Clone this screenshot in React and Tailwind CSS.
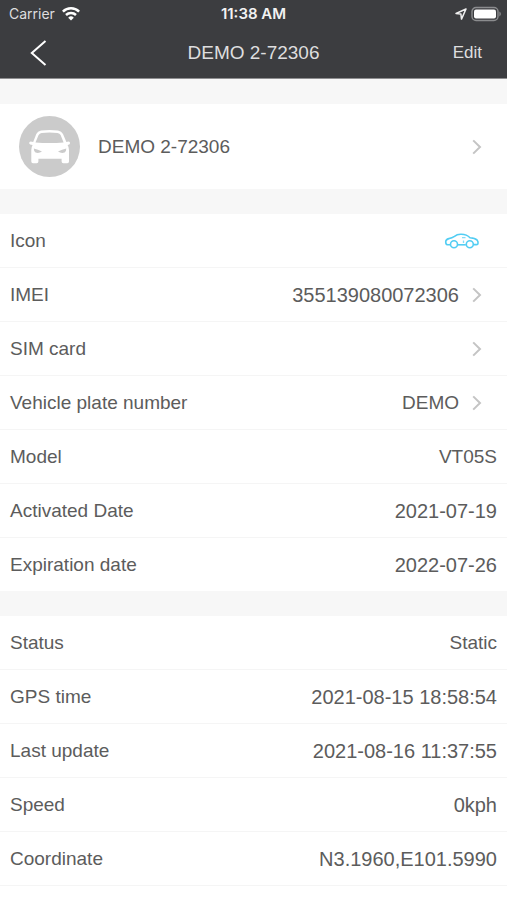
import React from "react";

const deviceInfo = [
  { label: "IMEI", value: "355139080072306", link: true, numeric: true },
  { label: "SIM card", value: "", link: true },
  { label: "Vehicle plate number", value: "DEMO", link: true },
  { label: "Model", value: "VT05S" },
  { label: "Activated Date", value: "2021-07-19", numeric: true },
  { label: "Expiration date", value: "2022-07-26", numeric: true },
];

const statusInfo = [
  { label: "Status", value: "Static" },
  { label: "GPS time", value: "2021-08-15 18:58:54", numeric: true },
  { label: "Last update", value: "2021-08-16 11:37:55", numeric: true },
  { label: "Speed", value: "0kph", numeric: true },
  { label: "Coordinate", value: "N3.1960,E101.5990", numeric: true },
];

const Chevron = () => (
  <svg className="w-3 h-4 shrink-0" viewBox="0 0 12 16" fill="none" stroke="#c4c4c4" strokeWidth="2">
    <path d="M2.2 1.4 9 8l-6.8 6.6" />
  </svg>
);

const WifiIcon = () => (
  <svg className="w-5 h-4" viewBox="0 0 20 16" fill="none" stroke="#fff" strokeWidth="2.5">
    <path d="M1.9 5.6a11.6 11.6 0 0 1 16.2 0" />
    <path d="M5 9a7.2 7.2 0 0 1 10 0" />
    <path d="M10 14.6 7.2 11.7a4 4 0 0 1 5.6 0z" fill="#fff" stroke="none" />
  </svg>
);

const LocationIcon = () => (
  <svg className="w-3 h-3" viewBox="0 0 12 12" fill="none" stroke="#f0f0f0" strokeWidth="1.5" strokeLinejoin="round">
    <path d="M11 1 1 5.5l4.9.6.6 5z" />
  </svg>
);

const BatteryIcon = () => (
  <svg className="w-8 h-4" viewBox="0 0 32 16">
    <rect x="1" y="1.5" width="26" height="13" rx="4" fill="none" stroke="#8b8c8e" strokeWidth="1.4" />
    <rect x="3" y="3.5" width="22" height="9" rx="2" fill="#fff" />
    <path d="M28.4 5.6c2 1 2 3.8 0 4.8z" fill="#8b8c8e" />
  </svg>
);

// Front view of a car in the round avatar
const CarAvatar = () => (
  <svg className="w-[61px] h-[61px] shrink-0" viewBox="0 0 61 61">
    <circle cx="30.5" cy="30.5" r="30.5" fill="#cbcbcb" />
    <path
      fill="#fff"
      fillRule="evenodd"
      d="M22 14.5Q30.5 13.3 39 14.5Q42.6 15 44 18L47.4 26L49.5 25.6Q51.3 25.7 51 27.4Q50.7 28.6 48.6 29Q50 31.3 50 34V45.5Q50 47.3 48.3 47.3H44.3Q42.6 47.3 42.6 45.5V42.8H19.4V45.5Q19.4 47.3 17.7 47.3H14Q12.3 47.3 12.3 45.5V34Q12.3 31.3 13.6 29Q10.4 28.6 10.2 27.4Q10 25.7 11.7 25.6L14.2 26L17.3 18Q18.6 15 22 14.5Z
      M22.6 17Q30.5 16 38.5 17Q40.8 17.3 41.6 19L44.6 26.5Q30.5 27.6 16.5 26.5L19.6 19Q20.5 17.3 22.6 17Z
      M14.8 32.5Q19 33.3 23 35.5Q20 37.7 16.5 36.6Q14.8 35.5 14.8 32.5Z
      M47.3 32.5Q43 33.3 39 35.5Q42 37.7 45.6 36.6Q47.3 35.5 47.3 32.5Z"
    />
  </svg>
);

const SideCarIcon = () => (
  <svg className="w-9 h-4" viewBox="0 0 36 16" fill="none" stroke="#52cdf3" strokeWidth="1.6" strokeLinejoin="round">
    <path d="M6.2 11.8H3.4Q1.7 11.5 1.7 8.8Q1.8 6.3 4.8 5.6Q8 5.2 10.5 3.4Q13 1.4 16.5 1.3Q22.5 1 26 4.8Q31 5.1 33.2 7.2Q34.4 8.8 34 10.4Q34 11.6 32.4 11.6H29.8" />
    <path d="M14 11.8H21.8" />
    <path d="M18 4.6h3.5M19.5 7.6v2.4" strokeWidth="1.3" opacity="0.7" />
    <circle cx="10" cy="11.2" r="3.5" />
    <circle cx="25.8" cy="11.2" r="3.5" />
  </svg>
);

const rowClass = "w-full min-h-[53px] flex items-center justify-between pl-[10px] text-left";

const InfoRow = ({ label, value, link, numeric }) => {
  const valueClass = numeric ? "text-[20px]" : "text-[19px]";

  if (link) {
    return (
      <li>
        <button type="button" className={`${rowClass} pr-6`}>
          <span>{label}</span>
          <span className="flex items-center gap-3">
            <span className={valueClass}>{value}</span>
            <Chevron />
          </span>
        </button>
      </li>
    );
  }

  return (
    <li>
      <div className={`${rowClass} pr-[10px]`}>
        <span>{label}</span>
        <span className={valueClass}>{value}</span>
      </div>
    </li>
  );
};

const App = () => {
  return (
    <div className="min-h-screen bg-white text-[19px] leading-6 text-[#5c5c5c] font-['Liberation_Sans',Arial,sans-serif]">
      <header className="bg-[#3c3d40] border-b border-[#8e8e90] text-[#dededf]">
        {/* Phone status bar */}
        <div className="h-[27px] grid grid-cols-[1fr_auto_1fr] items-center px-1 text-[14px] font-['Inter',sans-serif]">
          <div className="flex items-center gap-[6px] pl-[5px]">
            <span>Carrier</span>
            <WifiIcon />
          </div>
          <span className="text-[15px] font-semibold text-[#f2f2f2]">11:38 AM</span>
          <div className="flex items-center justify-end gap-1">
            <LocationIcon />
            <BatteryIcon />
          </div>
        </div>

        {/* Title bar */}
        <div className="h-[51px] grid grid-cols-[1fr_auto_1fr] items-center px-[25px]">
          <button type="button" aria-label="Back" className="justify-self-start pl-[5px]">
            <svg className="w-[18px] h-7" viewBox="0 0 18 28" fill="none" stroke="#fff" strokeWidth="2">
              <path d="M15.5 2 1.8 14l13.7 12" />
            </svg>
          </button>
          <h1>DEMO 2-72306</h1>
          <button type="button" className="justify-self-end text-[17px]">Edit</button>
        </div>
      </header>

      <main className="bg-[#f7f7f7] pt-[25px] flex flex-col gap-[25px]">
        <button type="button" className="h-[85px] bg-white flex items-center pl-[19px] pr-6 text-left">
          <CarAvatar />
          <span className="flex-1 pl-[18px]">DEMO 2-72306</span>
          <Chevron />
        </button>

        <ul className="bg-white divide-y divide-[#f5f5f5]">
          <li>
            <button type="button" className={`${rowClass} pr-[27px]`}>
              <span>Icon</span>
              <SideCarIcon />
            </button>
          </li>
          {deviceInfo.map((item) => (
            <InfoRow key={item.label} {...item} />
          ))}
        </ul>

        <ul className="bg-white divide-y divide-[#f5f5f5] border-b border-b-[#f5f5f5]">
          {statusInfo.map((item) => (
            <InfoRow key={item.label} {...item} />
          ))}
        </ul>
      </main>
    </div>
  );
};

export default App;
